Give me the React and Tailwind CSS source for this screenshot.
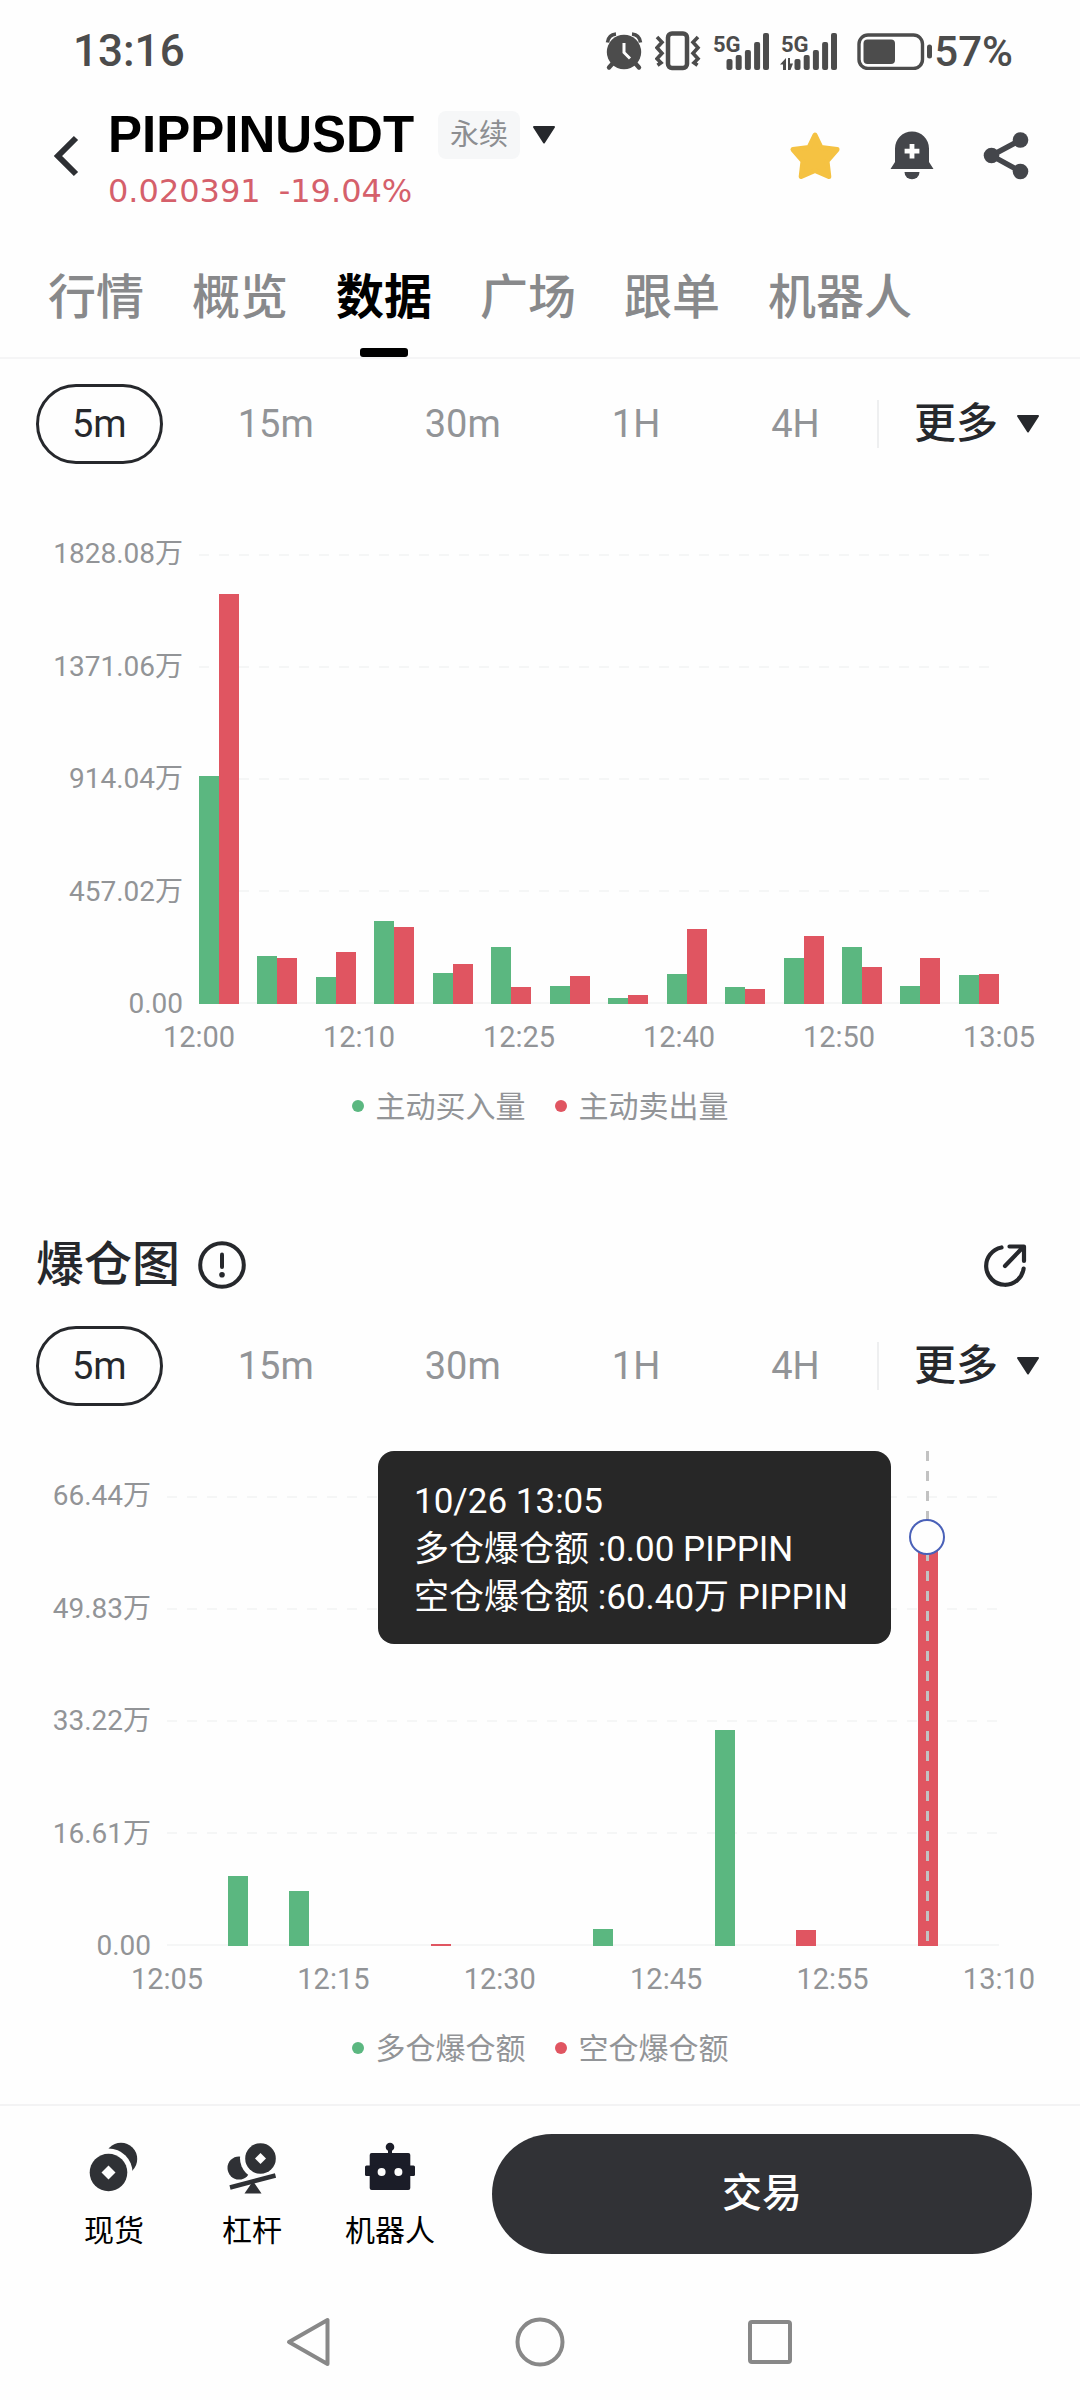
const tabs = ['行情', '概览', '数据', '广场', '跟单', '机器人'];

const intervals = ['5m', '15m', '30m', '1H', '4H'];

const volumeChart = {
  max: 1828.08,
  yLabels: ['1828.08万', '1371.06万', '914.04万', '457.02万', '0.00'],
  xLabels: ['12:00', '12:10', '12:25', '12:40', '12:50', '13:05'],
  legend: ['主动买入量', '主动卖出量'],
  data: [
    [928, 1664],
    [197, 186],
    [108, 211],
    [337, 313],
    [124, 161],
    [231, 68],
    [75, 114],
    [23, 35],
    [121, 304],
    [71, 61],
    [187, 276],
    [232, 149],
    [75, 186],
    [118, 121],
  ],
};

const liquidationChart = {
  max: 66.44,
  yLabels: ['66.44万', '49.83万', '33.22万', '16.61万', '0.00'],
  xLabels: ['12:05', '12:15', '12:30', '12:45', '12:55', '13:10'],
  legend: ['多仓爆仓额', '空仓爆仓额'],
  data: [
    [0, 0],
    [10.37, 0],
    [8.19, 0],
    [0, 0],
    [0, 0.3],
    [0, 0],
    [0, 0],
    [2.5, 0],
    [0, 0],
    [31.9, 0],
    [0, 2.4],
    [0, 0],
    [0, 60.4],
    [0, 0],
  ],
  activeIndex: 12,
  tooltip: ['10/26 13:05', '多仓爆仓额 :0.00 PIPPIN', '空仓爆仓额 :60.40万 PIPPIN'],
};

const AlarmIcon = () => (
  <svg className="h-10 w-[38px]" viewBox="0 0 38 40" fill="none">
    <circle cx="19" cy="21" r="17.2" fill="#4c4c4c" />
    <path d="M2.5 11.5C3 7 6 3.5 11 3M35.5 11.5C35 7 32 3.5 27 3" stroke="#4c4c4c" strokeWidth="3.6" />
    <path d="M8 32l-4 4.5M30 32l4 4.5" stroke="#4c4c4c" strokeWidth="4.4" strokeLinecap="round" />
    <path d="M19 12v9.5l6 6" stroke="#fefefe" strokeWidth="3" />
  </svg>
);

const VibrateIcon = () => (
  <svg className="h-10 w-[46px]" viewBox="0 0 46 40" fill="none" stroke="#4c4c4c">
    <rect x="13" y="2.5" width="19" height="34.5" rx="4" strokeWidth="4.5" />
    <path d="M2 6l5 5.2-5 5.5 5 5.5-5 5.5 4 4-3.5 2.5M43 6l-5 5.2 5 5.5-5 5.5 5 5.5-4 4 3.5 2.5" strokeWidth="3.6" />
  </svg>
);

const SignalIcon = ({ transfer }) => (
  <svg className="h-[37px] w-14 overflow-visible" viewBox="0 0 56 37" fill="#4c4c4c">
    <text x="0" y="19" fontSize="22" fontWeight="700" fontFamily="Roboto">5G</text>
    <rect x="13.5" y="26" width="6" height="11" rx="2" />
    <rect x="22.7" y="22" width="6" height="15" rx="2" />
    <rect x="31.9" y="17" width="6" height="20" rx="2" />
    <rect x="41.1" y="9" width="6" height="28" rx="2" />
    <rect x="50" y="0" width="6" height="37" rx="2" />
    {transfer && <path d="M5 25v12H2v-5.5h-3zM7 25h2v5.500h3L9.500 37H7z" />}
  </svg>
);

const BatteryIcon = () => (
  <svg className="h-[37px] w-[76px]" viewBox="0 0 76 37" fill="none">
    <rect x="2" y="2" width="63.5" height="33.5" rx="9" stroke="#4c4c4c" strokeWidth="3.4" />
    <rect x="6.5" y="6.5" width="31.5" height="24.5" rx="4" fill="#4c4c4c" />
    <rect x="70" y="11.5" width="5" height="14" rx="2.5" fill="#4c4c4c" />
  </svg>
);

const StarIcon = () => (
  <svg className="h-[50px] w-[52px]" viewBox="0 0 52 50">
    <path
      d="M26 4L32 16.5 48 18.500 38 30 39.800 45.500 26 39.500 12.200 45.500 14 30 4 18.500 20 16.500z"
      fill="#f5c242"
      stroke="#f5c242"
      strokeWidth="5"
      strokeLinejoin="round"
    />
  </svg>
);

const BellIcon = () => (
  <svg className="h-[50px] w-11" viewBox="0 0 44 50" fill="#44464b">
    <path d="M5 17.5a17 17 0 0 1 34 0V31l4.500 7H.5L5 31z" />
    <path d="M14.5 41h15a7.500 7.300 0 0 1-15 0z" />
    <path d="M19.6 13h4.800v4.800h5v4.800h-5v4.800h-4.800v-4.800h-5v-4.800h5z" fill="#fefefe" />
  </svg>
);

const ShareIcon = () => (
  <svg className="h-[50px] w-[46px]" viewBox="0 0 46 50" fill="#44464b" stroke="#44464b">
    <path d="M37.5 9L8.500 24.500l29 16" fill="none" strokeWidth="5.4" />
    <circle cx="37.5" cy="9" r="7.8" stroke="none" />
    <circle cx="8.5" cy="24.5" r="7.8" stroke="none" />
    <circle cx="37.5" cy="40.5" r="7.8" stroke="none" />
  </svg>
);

const TriangleDown = () => (
  <svg className="h-5 w-6" viewBox="0 0 24 20">
    <path d="M2 2h20L12 17.5z" fill="#26282c" stroke="#26282c" strokeWidth="2" strokeLinejoin="round" />
  </svg>
);

const InfoIcon = () => (
  <svg className="size-12" viewBox="0 0 48 48" fill="none" stroke="#26282c" strokeWidth="4" strokeLinecap="round">
    <circle cx="24" cy="24" r="21.8" />
    <path d="M24 13.5v12.500" />
    <circle cx="24" cy="33.8" r="2.8" fill="#26282c" stroke="none" />
  </svg>
);

const ExternalIcon = () => (
  <svg className="size-12" viewBox="0 0 48 48" fill="none" stroke="#26282c" strokeWidth="4.2" strokeLinecap="round" strokeLinejoin="round">
    <path d="M20.5 6.500A18.800 18.800 0 1 0 42.600 27.500" />
    <path d="M24 25L42.500 5.800M28.500 5.500h14.500v14.500" />
  </svg>
);

const CoinsIcon = () => (
  <svg className="size-[50px]" viewBox="0 0 50 50" fill="#2f3135">
    <circle cx="32" cy="17" r="16.2" />
    <circle cx="19.5" cy="30.5" r="24" fill="#fefefe" />
    <circle cx="19.5" cy="30.5" r="18.8" />
    <path d="M19.5 23.500l7 7-7 7-7-7z" fill="#fefefe" />
  </svg>
);

const LeverIcon = () => (
  <svg className="size-[50px] overflow-visible" viewBox="0 0 50 50" fill="#2f3135">
    <circle cx="12" cy="26" r="11.5" />
    <circle cx="33.5" cy="16.5" r="20.5" fill="#fefefe" />
    <circle cx="33.5" cy="16.5" r="15.3" />
    <path d="M33.5 11l5.500 5.500-5.500 5.500-5.500-5.500z" fill="#fefefe" />
    <path d="M26 39l8.500 12.500h-17z" />
    <path d="M3 45.500L48.500 33.500" stroke="#2f3135" strokeWidth="4.6" />
  </svg>
);

const RobotIcon = () => (
  <svg className="size-[50px]" viewBox="0 0 50 50" fill="#1b1d28">
    <circle cx="25" cy="5" r="4.3" />
    <path d="M23 8h4v6h-4z" />
    <rect x="4.7" y="11" width="40.6" height="37" rx="2" />
    <rect x="0" y="23.5" width="50" height="10.5" rx="1.5" />
    <circle cx="16.6" cy="30" r="4" fill="#fefefe" />
    <circle cx="33.4" cy="30" r="4" fill="#fefefe" />
  </svg>
);

const IntervalBar = ({ name }) => (
  <div className="flex items-center pl-9 pr-10">
    <div className="flex gap-[39px]">
      {intervals.map((item, i) => (
        <button
          key={item}
          className={
            i === 0
              ? 'h-20 rounded-full border-3 border-[#26282c] px-[33px] text-[38px] text-[#26282c]'
              : 'h-20 px-9 text-[38px] text-[#929497]'
          }
        >
          {item}
        </button>
      ))}
    </div>
    <div className="ml-auto flex items-center">
      <span className="mr-[35px] h-12 w-[2px] bg-[#eeeff0]" />
      <label className="flex items-center gap-[18px]">
        <select aria-label={name} className="w-[84px] appearance-none bg-transparent text-[42px] leading-[60px] font-medium text-[#26282c]">
          <option>更多</option>
          <option>1D</option>
          <option>1W</option>
        </select>
        <TriangleDown />
      </label>
    </div>
  </div>
);

const BarChart = ({ chart, axisClass }) => (
  <div className="pl-[51px] pr-[81px] text-[#929497]">
    <div className="flex gap-4">
      <div className={`flex flex-col justify-between text-[28px] ${axisClass}`}>
        {chart.yLabels.map((label) => (
          <span key={label} className="flex h-0 items-center justify-end whitespace-nowrap">{label}</span>
        ))}
      </div>

      <div className="flex-1">
        <div className="relative flex h-[450px] items-end justify-between">
          {/* Grid lines */}
          <div className="absolute inset-0 flex flex-col justify-between">
            {chart.yLabels.map((label, i) => (
              <span
                key={label}
                className={
                  i === chart.yLabels.length - 1
                    ? 'h-[2px] bg-[#f5f6f6]'
                    : 'h-[2px] bg-[repeating-linear-gradient(90deg,#f5f6f6_0_10px,transparent_10px_20px)]'
                }
              />
            ))}
          </div>

          {chart.data.map(([green, red], i) => (
            <div key={i} className="relative flex h-full w-10 items-end">
              <div className="w-5 bg-[#5bb780]" style={{ height: `${(green / chart.max) * 100}%` }} />
              <div className="w-5 bg-[#e05561]" style={{ height: `${(red / chart.max) * 100}%` }} />
              {i === chart.activeIndex && (
                <>
                  <span className="absolute -top-[45px] bottom-0 left-7 w-[3px] bg-[repeating-linear-gradient(180deg,#c2c2c2_0_10px,transparent_10px_20px)]" />
                  <span
                    className="absolute left-[11px] size-9 translate-y-1/2 rounded-full border-2 border-[#4a61b8] bg-[#fefefe]"
                    style={{ bottom: `${(red / chart.max) * 100}%` }}
                  />
                </>
              )}
            </div>
          ))}

          {chart.tooltip && (
            <div className="absolute right-[108px] -top-[45px] w-[513px] rounded-2xl bg-[#272727] pt-[27px] pb-[22px] pl-9 text-[35px] leading-[48px] whitespace-nowrap text-white">
              {chart.tooltip.map((line) => (
                <p key={line}>{line}</p>
              ))}
            </div>
          )}
        </div>

        <div className="mt-[14px] flex h-10 items-center justify-between text-[29px]">
          {chart.xLabels.map((label) => (
            <span key={label} className="flex w-0 justify-center">{label}</span>
          ))}
        </div>
      </div>
    </div>
  </div>
);

const Legend = ({ items }) => (
  <div className="mt-7 flex h-10 items-center justify-center gap-[29px] text-[30px] text-[#929497]">
    <span className="flex items-center gap-3">
      <i className="size-3 rounded-full bg-[#5bb780]" />
      {items[0]}
    </span>
    <span className="flex items-center gap-3">
      <i className="size-3 rounded-full bg-[#e05561]" />
      {items[1]}
    </span>
  </div>
);

const App = () => {
  return (
    <div className="min-h-screen bg-[#fefefe] font-['Roboto','Noto_Sans_CJK_SC',sans-serif]">
      {/* Status bar */}
      <div className="flex h-[102px] items-center justify-between pl-[73px] pr-[67px] font-medium text-[#4c4c4c]">
        <span className="text-[44px]">13:16</span>
        <div className="flex items-center gap-3">
          <AlarmIcon />
          <VibrateIcon />
          <SignalIcon />
          <SignalIcon transfer />
          <div className="flex items-center gap-px pl-2 text-[42px]">
            <BatteryIcon />
            <span>57%</span>
          </div>
        </div>
      </div>

      {/* Header */}
      <header className="flex h-[108px] items-center pl-[52px] pr-[51px]">
        <button aria-label="返回">
          <svg className="h-11 w-7" viewBox="0 0 28 44" fill="none" stroke="#2d2f33" strokeWidth="6">
            <path d="M24 4L6 22l18 18" />
          </svg>
        </button>
        <div className="ml-7 pt-[6px]">
          <div className="flex items-center">
            <h1 className="font-['Liberation_Sans',sans-serif] text-[51px] leading-[56px] font-bold text-black">PIPPINUSDT</h1>
            <span className="ml-6 rounded-lg bg-[#f6f7f8] px-3 text-[29px] leading-[48px] text-[#8c8e91]">永续</span>
            <button aria-label="切换合约" className="ml-3">
              <TriangleDown />
            </button>
          </div>
          <p className="mt-2 flex gap-[18px] font-['DejaVu_Sans',sans-serif] text-[32px] leading-10 text-[#d5606b]">
            <span>0.020391</span>
            <span>-19.04%</span>
          </p>
        </div>
        <div className="ml-auto flex items-center gap-[49px]">
          <button aria-label="收藏"><StarIcon /></button>
          <button aria-label="提醒"><BellIcon /></button>
          <button aria-label="分享"><ShareIcon /></button>
        </div>
      </header>

      {/* Tabs */}
      <nav className="flex gap-12 border-b-2 border-[#f5f5f6] px-12 pt-[58px] text-[48px] leading-[60px]">
        {tabs.map((tab) => (
          <a
            key={tab}
            href="#"
            className={
              tab === '数据'
                ? 'flex flex-col items-center gap-5 font-bold text-black'
                : 'flex flex-col items-center font-medium text-[#88898b]'
            }
          >
            {tab}
            {tab === '数据' && <span className="h-[9px] w-12 rounded-[3px] bg-black" />}
          </a>
        ))}
      </nav>

      {/* Active buy / sell volume */}
      <section className="pt-[25px]">
        <IntervalBar name="主动买卖量周期" />
        <div className="mt-[90px]">
          <BarChart chart={volumeChart} axisClass="h-[450px] w-[132px]" />
        </div>
        <Legend items={volumeChart.legend} />
      </section>

      {/* Liquidations */}
      <section className="mt-[115px]">
        <div className="mb-[37px] flex items-center pl-9 pr-[51px]">
          <h2 className="text-[48px] leading-[48px] font-medium text-[#26282c]">爆仓图</h2>
          <button aria-label="说明" className="ml-[18px] h-12"><InfoIcon /></button>
          <button aria-label="打开" className="ml-auto h-12"><ExternalIcon /></button>
        </div>
        <IntervalBar name="爆仓图周期" />
        <div className="mt-[90px]">
          <BarChart chart={liquidationChart} axisClass="h-[450px] w-[100px]" />
        </div>
        <Legend items={liquidationChart.legend} />
      </section>

      {/* Bottom actions */}
      <footer className="mt-9 flex items-start border-t-2 border-[#f3f3f4] pt-7 pb-[30px] pl-[45px] pr-12 text-[30px] leading-10 text-black">
        <button className="flex w-[138px] flex-col items-center gap-[19px] pt-2">
          <CoinsIcon />
          现货
        </button>
        <button className="flex w-[138px] flex-col items-center gap-[19px] pt-2">
          <LeverIcon />
          杠杆
        </button>
        <button className="flex w-[138px] flex-col items-center gap-[19px] pt-2">
          <RobotIcon />
          机器人
        </button>
        <button className="ml-[33px] h-[120px] flex-1 rounded-full bg-[#313236] text-[40px] font-medium text-white">交易</button>
      </footer>

      {/* System navigation */}
      <div className="flex h-[116px] items-center justify-center gap-[181px]">
        <button aria-label="后退">
          <svg className="size-[50px]" viewBox="0 0 50 50" fill="none" stroke="#888888" strokeWidth="4" strokeLinejoin="round">
            <path d="M43.500 3v44L5 25z" />
          </svg>
        </button>
        <button aria-label="主屏幕">
          <svg className="size-[50px]" viewBox="0 0 50 50" fill="none" stroke="#888888" strokeWidth="4">
            <circle cx="25" cy="25" r="22.5" />
          </svg>
        </button>
        <button aria-label="最近任务">
          <svg className="size-[50px]" viewBox="0 0 50 50" fill="none" stroke="#888888" strokeWidth="4">
            <rect x="4" y="5" width="40" height="40" rx="2" />
          </svg>
        </button>
      </div>
    </div>
  );
};

export default App;
